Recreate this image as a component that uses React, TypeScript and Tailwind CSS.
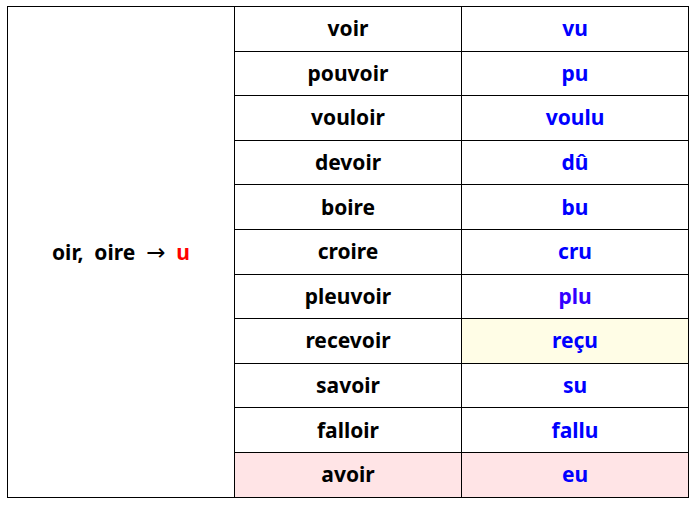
const rows: { verb: string; pp: string; bg?: string; color?: string }[] = [
  { verb: "voir", pp: "vu" },
  { verb: "pouvoir", pp: "pu" },
  { verb: "vouloir", pp: "voulu" },
  { verb: "devoir", pp: "dû" },
  { verb: "boire", pp: "bu" },
  { verb: "croire", pp: "cru" },
  { verb: "pleuvoir", pp: "plu", color: "text-[#3300ff]" },
  { verb: "recevoir", pp: "reçu", bg: "yellow" },
  { verb: "savoir", pp: "su" },
  { verb: "falloir", pp: "fallu" },
  { verb: "avoir", pp: "eu", bg: "pink" },
];

export default function App() {
  return (
    <div className="w-[698px] h-[506px] bg-white pt-[6px] pl-[7px] font-['Noto_Sans',sans-serif] font-bold text-[21px] text-black">
      <table className="w-[681px] table-fixed border-collapse">
        <tbody>
          {rows.map((r, i) => (
            <tr key={r.verb} className="h-[44.6px]">
              {i === 0 && (
                <td
                  rowSpan={rows.length}
                  className="w-[227px] border border-black text-center align-middle whitespace-pre"
                >
                  {"oir,  oire  "}
                  <span className="font-['DejaVu_Sans',sans-serif] font-normal text-[23px]">→</span>
                  {"  "}
                  <span className="text-[#ff0000]">u</span>
                </td>
              )}
              <td
                className={
                  "w-[227px] border border-black text-center align-middle p-0 leading-none " +
                  (r.bg === "pink" ? "bg-[#ffe4e6]" : "")
                }
              >
                {r.verb}
              </td>
              <td
                className={
                  "w-[227px] border border-black text-center align-middle p-0 leading-none " +
                  (r.color ?? "text-[#0000ff]") +
                  " " +
                  (r.bg === "yellow" ? "bg-[#fffde6]" : r.bg === "pink" ? "bg-[#ffe4e6]" : "")
                }
              >
                {r.pp}
              </td>
            </tr>
          ))}
        </tbody>
      </table>
    </div>
  );
}
